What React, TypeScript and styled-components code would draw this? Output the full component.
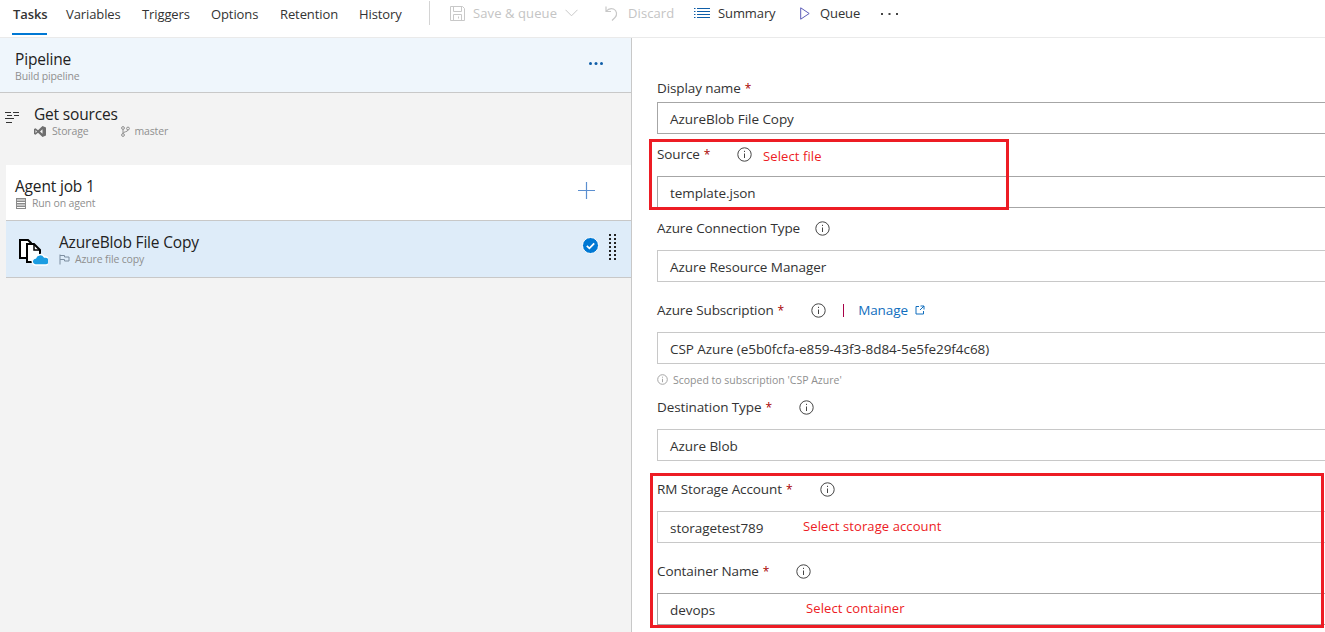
import React from "react";
import styled, { createGlobalStyle } from "styled-components";

const Global = createGlobalStyle`
  html, body { margin: 0; padding: 0; height: 100%; overflow: hidden; background: #fff; }
  body { font-family: "Open Sans", "Noto Sans", "Liberation Sans", sans-serif; color: #333; }
`;

const Page = styled.div`
  width: 1325px;
  height: 632px;
  position: relative;
  overflow: hidden;
  display: flex;
  flex-direction: column;
`;

const Toolbar = styled.div`
  height: 37px;
  flex: none;
  border-bottom: 1px solid #eaeaea;
  display: flex;
  align-items: flex-start;
  padding-left: 12px;
`;

const Tab = styled.div<{ $active?: boolean; $w: number }>`
  width: ${(p) => p.$w}px;
  height: 35px;
  box-sizing: border-box;
  font-size: 13px;
  letter-spacing: -0.1px;
  line-height: 28px;
  color: #333;
  font-weight: ${(p) => (p.$active ? 600 : 400)};
  padding-left: ${(p) => (p.$active ? 1 : 0)}px;
  position: relative;
  &::after {
    content: "";
    display: ${(p) => (p.$active ? "block" : "none")};
    position: absolute;
    left: 0;
    top: 33px;
    width: 35px;
    height: 2px;
    background: #0078d4;
  }
`;

const Divider = styled.div`
  width: 1px;
  height: 24px;
  margin: 1px 20px 0 0;
  background: #d4d4d4;
`;

const Action = styled.div<{ $disabled?: boolean; $w: number }>`
  width: ${(p) => p.$w}px;
  height: 26px;
  display: flex;
  align-items: center;
  font-size: 13px;
  letter-spacing: ${(p) => (p.$disabled ? "0.1px" : "-0.1px")};
  color: ${(p) => (p.$disabled ? "#c4c4c4" : "#333")};
`;

const ActionIcon = styled.svg<{ $mr: number }>`
  flex: none;
  margin-right: ${(p) => p.$mr}px;
`;

const Body = styled.div`
  flex: 1;
  display: flex;
  min-height: 0;
`;

const LeftPane = styled.div`
  width: 631px;
  flex: none;
  background: #f3f3f3;
  border-right: 1px solid #c8c8c8;
`;

const PipelineRow = styled.div`
  height: 55px;
  box-sizing: border-box;
  background: #eff6fc;
  border-bottom: 1px solid #c8c8c8;
  padding: 10px 28px 0 15px;
  display: flex;
  justify-content: space-between;
`;

const Title = styled.div`
  padding-top: 1px;
  font-size: 15.5px;
  letter-spacing: -0.18px;
  line-height: 20px;
  color: #222;
`;

const Sub = styled.div`
  font-size: 10.5px;
  letter-spacing: -0.15px;
  line-height: 14px;
  color: #8f8f8f;
  display: flex;
  align-items: center;
`;

const SourcesRow = styled.div`
  height: 72px;
  box-sizing: border-box;
  padding: 10px 0 0 5px;
  display: flex;
`;

const SourcesText = styled.div`
  margin-left: 15px;
`;

const SubGap = styled.span`
  width: 32px;
`;

const JobRow = styled.div`
  margin-left: 6px;
  height: 56px;
  box-sizing: border-box;
  background: #fff;
  border-bottom: 1px solid #c8c8c8;
  padding: 10px 36px 0 9px;
  display: flex;
  justify-content: space-between;
`;

const TaskRow = styled.div`
  margin-left: 6px;
  height: 57px;
  box-sizing: border-box;
  background: #deecf9;
  border-bottom: 1px solid #c8c8c8;
  padding: 10px 15px 0 13px;
  display: flex;
  align-items: flex-start;
`;

const TaskText = styled.div`
  margin-left: 11px;
  flex: 1;
`;

const FormPane = styled.div`
  flex: 1;
  padding: 40px 0 0 25px;
  min-width: 0;
`;

const LabelRow = styled.div<{ $top?: number; $bottom?: number }>`
  margin-top: ${(p) => p.$top ?? 0}px;
  margin-bottom: ${(p) => p.$bottom ?? 12}px;
  height: 20px;
  display: flex;
  align-items: center;
  font-size: 13.5px;
  letter-spacing: -0.1px;
  color: #333;
`;

const Star = styled.span`
  color: #a80000;
  margin-left: 4px;
  font-size: 12px;
`;

const InfoIcon = styled.svg<{ $ml: number }>`
  margin-left: ${(p) => p.$ml}px;
  flex: none;
`;

const Input = styled.div<{ $dark?: boolean }>`
  height: 32px;
  box-sizing: border-box;
  width: 680px;
  border: 1px solid ${(p) => (p.$dark ? "#a6a6a6" : "#c8c8c8")};
  padding-left: 12px;
  font-size: 13.5px;
  letter-spacing: -0.05px;
  line-height: 32px;
  color: #333;
`;

const Help = styled.div`
  margin-top: 8px;
  height: 15px;
  font-size: 10.5px;
  color: #8f8f8f;
  display: flex;
  align-items: center;
  gap: 5px;
`;

const Pipe = styled.span`
  width: 1px;
  height: 13px;
  background: #a80047;
  margin: 0 14px 0 17px;
`;

const ManageLink = styled.span`
  color: #106ebe;
  margin-right: 7px;
`;

const RedBox = styled.div<{ $l: number; $t: number; $w: number; $h: number }>`
  position: absolute;
  left: ${(p) => p.$l}px;
  top: ${(p) => p.$t}px;
  width: ${(p) => p.$w}px;
  height: ${(p) => p.$h}px;
  box-sizing: border-box;
  border: 3px solid #ed1c24;
`;

const Note = styled.div<{ $l: number; $t: number }>`
  position: absolute;
  left: ${(p) => p.$l}px;
  top: ${(p) => p.$t}px;
  font-size: 13px;
  letter-spacing: 0.1px;
  line-height: 18px;
  color: #ed1c24;
`;

function Info({ ml }: { ml: number }) {
  return (
    <InfoIcon $ml={ml} width="15" height="15" viewBox="0 0 15 15" fill="none">
      <circle cx="7.5" cy="7.5" r="6.7" stroke="#444" />
      <path d="M7.5 6.5v4.5" stroke="#444" />
      <path d="M7.5 3.8v1.2" stroke="#444" />
    </InfoIcon>
  );
}

function FlagIcon() {
  return (
    <svg width="11" height="11" viewBox="0 0 11 11" fill="none" style={{ marginRight: 5 }}>
      <path d="M1 0.5v10M1 1.5h4.5v1.5h4.5v4h-4.5v-1.5H1" stroke="#7d8ea0" />
    </svg>
  );
}

export default function App() {
  return (
    <Page>
      <Global />
      <Toolbar>
        <Tab $active $w={54}>Tasks</Tab>
        <Tab $w={76}>Variables</Tab>
        <Tab $w={69}>Triggers</Tab>
        <Tab $w={69}>Options</Tab>
        <Tab $w={79}>Retention</Tab>
        <Tab $w={70}>History</Tab>
        <Divider />
        <Action $disabled $w={155}>
          <ActionIcon $mr={8} width="15" height="15" viewBox="0 0 15 15" fill="none" stroke="#c8c8c8">
            <path d="M0.5 0.5h12l2 2v12h-14z" />
            <path d="M3.5 0.5v5h8v-5M3.5 14.5v-6h8v6M8.5 10.5v2" />
          </ActionIcon>
          Save &amp; queue
          <svg width="13" height="8" viewBox="0 0 13 8" fill="none" stroke="#c8c8c8" style={{ marginLeft: 8 }}>
            <path d="M0.5 0.8l6 6 6-6" />
          </svg>
        </Action>
        <Action $disabled $w={89}>
          <ActionIcon $mr={10} width="13" height="15" viewBox="0 0 13 15" fill="none" stroke="#c8c8c8" strokeWidth="1.2">
            <path d="M1 0.5v5h5M1 5.5c2-2.5 5-3.5 7.5-2.5 3.5 1.5 4 6 1.5 8.5l-3 3" />
          </ActionIcon>
          Discard
        </Action>
        <Action $w={106}>
          <ActionIcon $mr={8} width="16" height="12" viewBox="0 0 16 12" fill="none" stroke="#0f5ea8">
            <path d="M3 1.5h13M3 4.5h13M3 7.5h13M3 10.5h13M0 1.5h1.5M0 4.5h1.5M0 7.5h1.5M0 10.5h1.5" />
          </ActionIcon>
          Summary
        </Action>
        <Action $w={81}>
          <ActionIcon $mr={10} width="10" height="13" viewBox="0 0 10 13" fill="none" stroke="#5c5cb8">
            <path d="M0.7 0.8v11.4l8.5-5.7z" />
          </ActionIcon>
          Queue
        </Action>
        <Action $w={20}>
          <svg width="17" height="3" viewBox="0 0 17 3" fill="#444">
            <rect x="0" y="1" width="2" height="2" />
            <rect x="7.5" y="1" width="2" height="2" />
            <rect x="15" y="1" width="2" height="2" />
          </svg>
        </Action>
      </Toolbar>
      <Body>
        <LeftPane>
          <PipelineRow>
            <div>
              <Title>Pipeline</Title>
              <Sub>Build pipeline</Sub>
            </div>
            <svg width="14" height="3" viewBox="0 0 14 3" fill="#0f5ea8" style={{ marginTop: 14 }}>
              <circle cx="1.5" cy="1.5" r="1.5" />
              <circle cx="7" cy="1.5" r="1.5" />
              <circle cx="12.5" cy="1.5" r="1.5" />
            </svg>
          </PipelineRow>
          <SourcesRow>
            <svg width="14" height="13" viewBox="0 0 14 13" fill="none" stroke="#333" style={{ marginTop: 8 }}>
              <path d="M0 1.5h6M8 1.5h6M2 4.5h5M9 4.5h5M0 7.5h9M1 11.5h6" />
            </svg>
            <SourcesText>
              <Title>Get sources</Title>
              <Sub>
                <svg width="12" height="11" viewBox="0 0 12 11" fill="#6f6f6f" style={{ marginRight: 6 }}>
                  <path d="M8.5 0L12 1.5v8L8.5 11 4 6.8 1.5 8.8 0 8V3l1.5-.8L4 4.2zM8.5 3.2L6 5.5l2.5 2.3zM1.5 4v3l1.5-1.5z" />
                </svg>
                Storage
                <SubGap />
                <svg width="9" height="11" viewBox="0 0 9 11" fill="none" stroke="#8f8f8f" style={{ marginRight: 5 }}>
                  <circle cx="2" cy="2" r="1.4" />
                  <circle cx="2" cy="9" r="1.4" />
                  <circle cx="7" cy="2.5" r="1.4" />
                  <path d="M2 3.5v4M7 4c0 2-5 1.5-5 3.5" />
                </svg>
                master
              </Sub>
            </SourcesText>
          </SourcesRow>
          <JobRow>
            <div>
              <Title>Agent job 1</Title>
              <Sub>
                <svg width="10" height="11" viewBox="0 0 10 11" fill="#8a8a8a" style={{ marginRight: 6, marginLeft: 1 }}>
                  <path d="M0 0h10v11H0zM1 1.5v1h8v-1zM1 4v1h8V4zM1 6.5v1h8v-1zM1 9v1h8V9z" fillRule="evenodd" />
                </svg>
                Run on agent
              </Sub>
            </div>
            <svg width="17" height="17" viewBox="0 0 17 17" stroke="#5b8fd0" strokeWidth="1.2" style={{ marginTop: 7 }}>
              <path d="M8.5 0v17M0 8.5h17" />
            </svg>
          </JobRow>
          <TaskRow>
            <svg width="29" height="27" viewBox="0 0 29 27" fill="none" style={{ marginTop: 8, flex: "none" }}>
              <path d="M1 1h8l3 3v15H1z" fill="#fff" stroke="#000" strokeWidth="2" />
              <path d="M8 5h7l6 6v12H8z" fill="#fff" stroke="#000" strokeWidth="2" />
              <path d="M15 5v6h6" stroke="#000" strokeWidth="1.5" />
              <path d="M17 26a3.5 3.5 0 0 1-.5-7 5 5 0 0 1 9-1 4 4 0 0 1 1.5 8z" fill="#1b9de2" stroke="#fff" strokeWidth="1.5" />
            </svg>
            <TaskText>
              <Title>AzureBlob File Copy</Title>
              <Sub>
                <FlagIcon />
                Azure file copy
              </Sub>
            </TaskText>
            <svg width="17" height="17" viewBox="0 0 17 17" fill="none" style={{ marginTop: 6, marginRight: 10 }}>
              <circle cx="8.5" cy="8.5" r="8" fill="#0078d4" stroke="#fff" />
              <path d="M4.8 8.8l2.6 2.5 4.8-5" stroke="#fff" strokeWidth="1.8" />
            </svg>
            <svg width="7" height="28" viewBox="0 0 7 28" fill="#222" style={{ marginTop: 3 }}>
              {[0, 4, 8, 12, 16, 20, 24].map((y) => (
                <React.Fragment key={y}>
                  <rect x="0" y={y} width="2" height="2" />
                  <rect x="5" y={y} width="2" height="2" />
                </React.Fragment>
              ))}
            </svg>
          </TaskRow>
        </LeftPane>
        <FormPane>
          <LabelRow $bottom={4}>Display name<Star>*</Star></LabelRow>
          <Input $dark>AzureBlob File Copy</Input>
          <LabelRow $top={10}>Source<Star>*</Star><Info ml={27} /></LabelRow>
          <Input $dark>template.json</Input>
          <LabelRow $top={10}>Azure Connection Type<Info ml={15} /></LabelRow>
          <Input>Azure Resource Manager</Input>
          <LabelRow $top={18}>
            Azure Subscription<Star>*</Star><Info ml={27} />
            <Pipe />
            <ManageLink>Manage</ManageLink>
            <svg width="10" height="10" viewBox="0 0 10 10" fill="none" stroke="#106ebe">
              <path d="M4 1.5H1V9h7.5V6M5.5 1H9v3.5M9 1L5 5" />
            </svg>
          </LabelRow>
          <Input>CSP Azure (e5b0fcfa-e859-43f3-8d84-5e5fe29f4c68)</Input>
          <Help>
            <svg width="11" height="11" viewBox="0 0 11 11" fill="none" stroke="#a6a6a6">
              <circle cx="5.5" cy="5.5" r="4.8" />
              <path d="M5.5 4.8v3.4M5.5 2.7v1" />
            </svg>
            Scoped to subscription 'CSP Azure'
          </Help>
          <LabelRow $top={10}>Destination Type<Star>*</Star><Info ml={27} /></LabelRow>
          <Input>Azure Blob</Input>
          <LabelRow $top={18}>RM Storage Account<Star>*</Star><Info ml={28} /></LabelRow>
          <Input>storagetest789</Input>
          <LabelRow $top={18}>Container Name<Star>*</Star><Info ml={27} /></LabelRow>
          <Input $dark>devops</Input>
        </FormPane>
      </Body>
      <RedBox $l={649} $t={139} $w={360} $h={71} />
      <RedBox $l={650} $t={473} $w={674} $h={155} />
      <Note $l={763} $t={147}>Select file</Note>
      <Note $l={803} $t={517}>Select storage account</Note>
      <Note $l={806} $t={599}>Select container</Note>
    </Page>
  );
}
